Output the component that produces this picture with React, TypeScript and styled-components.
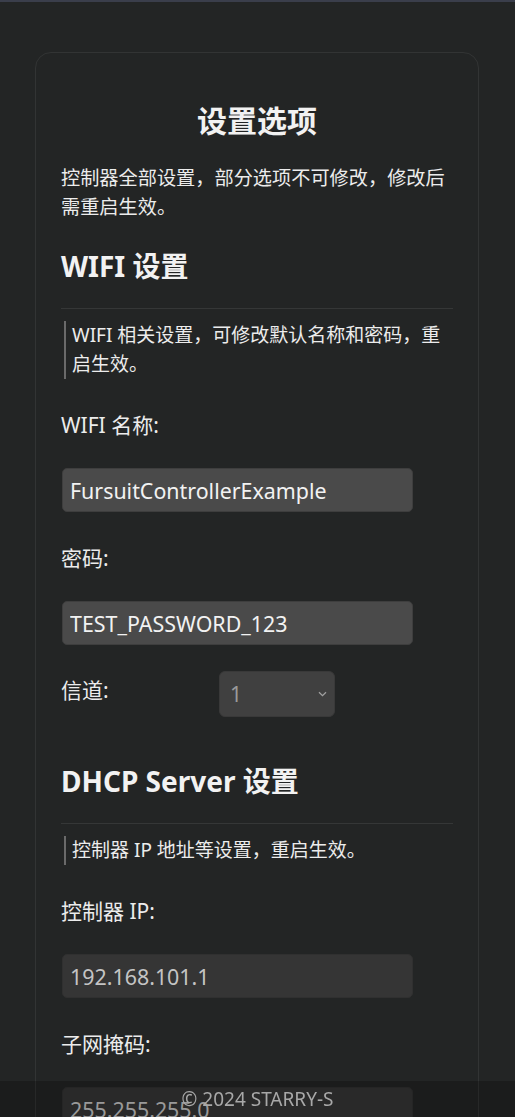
import React from "react";
import styled, { createGlobalStyle } from "styled-components";

const GlobalStyle = createGlobalStyle`
  html, body {
    margin: 0;
    padding: 0;
    background: #232525;
    color: #ececec;
    font-family: "Noto Sans", "Noto Sans CJK SC", sans-serif;
  }
  * { box-sizing: border-box; }
`;

const TopBar = styled.div`
  height: 2px;
  background: #3a3e4b;
`;

const Card = styled.main`
  width: 444px;
  margin: 50px 0 0 35px;
  padding: 0 25px 60px;
  border: 1px solid #323434;
  border-radius: 16px;
`;

const Title = styled.h1`
  margin: 50px 0 0;
  font-size: 30px;
  line-height: 36px;
  font-weight: 700;
  text-align: center;
  color: #f2f2f2;
`;

const Intro = styled.p`
  margin: 24px 0 0;
  font-size: 19.2px;
  line-height: 29px;
`;

const SectionTitle = styled.h2<{ $gap: number }>`
  margin: ${(p) => p.$gap}px 0 0;
  font-size: 28px;
  line-height: 34px;
  font-weight: 700;
  color: #f2f2f2;
`;

const Divider = styled.hr`
  margin: 25px 0 0;
  border: none;
  border-top: 1px solid #353737;
  height: 0;
`;

const Note = styled.blockquote`
  margin: 12px 0 0 3px;
  padding: 0 0 0 6px;
  border-left: 2px solid #6a6a6a;
  font-size: 19px;
  line-height: 29px;
`;

const Label = styled.label`
  display: block;
  margin-top: 32px;
  font-size: 21px;
  line-height: 29px;
  color: #ececec;
`;

const TextInput = styled.input`
  display: block;
  width: 351px;
  height: 44px;
  margin: 28px 0 0 1px;
  padding: 0 7px;
  font-family: "Noto Sans", "Noto Sans CJK SC", sans-serif;
  font-size: 21.4px;
  color: #f2f2f2;
  background: #4a4a4a;
  border: 1px solid #3e3e3e;
  border-radius: 5px;
  outline: none;

  &:disabled {
    background: #353535;
    color: #c4c4c4;
    border-color: #303030;
  }
`;

const SelectRow = styled.div`
  display: flex;
  align-items: flex-start;
  margin-top: 26px;
`;

const RowLabel = styled.label`
  width: 158px;
  margin-top: 5px;
  font-size: 21px;
  line-height: 29px;
`;

const SelectWrap = styled.div`
  position: relative;
  width: 116px;
  height: 46px;
`;

const Select = styled.select`
  appearance: none;
  width: 100%;
  height: 100%;
  padding: 0 10px;
  font-family: "Noto Sans", "Noto Sans CJK SC", sans-serif;
  font-size: 21px;
  color: #9a9a9a;
  background: #404040;
  border: 1px solid #393939;
  border-radius: 6px;
  outline: none;
`;

const Chevron = styled.svg`
  position: absolute;
  right: 8px;
  top: 20px;
  width: 9px;
  height: 6px;
  pointer-events: none;
`;

const Footer = styled.footer`
  position: fixed;
  left: 0;
  right: 0;
  bottom: 0;
  height: 36px;
  display: flex;
  align-items: center;
  justify-content: center;
  background: rgba(0, 0, 0, 0.22);
  color: #a8a8a8;
  font-size: 19px;
`;

export default function App() {
  return (
    <>
      <GlobalStyle />
      <TopBar />
      <Card>
        <Title>设置选项</Title>
        <Intro>控制器全部设置，部分选项不可修改，修改后需重启生效。</Intro>

        <SectionTitle $gap={28}>WIFI 设置</SectionTitle>
        <Divider />
        <Note>WIFI 相关设置，可修改默认名称和密码，重启生效。</Note>

        <Label>WIFI 名称:</Label>
        <TextInput defaultValue="FursuitControllerExample" />

        <Label>密码:</Label>
        <TextInput defaultValue="TEST_PASSWORD_123" />

        <SelectRow>
          <RowLabel>信道:</RowLabel>
          <SelectWrap>
            <Select defaultValue="1">
              {Array.from({ length: 13 }, (_, i) => (
                <option key={i} value={String(i + 1)}>
                  {i + 1}
                </option>
              ))}
            </Select>
            <Chevron viewBox="0 0 9 6">
              <path d="M1 1.2 L4.5 4.6 L8 1.2" fill="none" stroke="#a0a0a0" strokeWidth="1.3" />
            </Chevron>
          </SelectWrap>
        </SelectRow>

        <SectionTitle $gap={47}>DHCP Server 设置</SectionTitle>
        <Divider />
        <Note>控制器 IP 地址等设置，重启生效。</Note>

        <Label>控制器 IP:</Label>
        <TextInput defaultValue="192.168.101.1" disabled />

        <Label>子网掩码:</Label>
        <TextInput defaultValue="255.255.255.0" disabled />

        <Label>DHCP 起始地址:</Label>
        <TextInput defaultValue="192.168.101.2" disabled />
      </Card>
      <Footer>© 2024 STARRY-S</Footer>
    </>
  );
}
